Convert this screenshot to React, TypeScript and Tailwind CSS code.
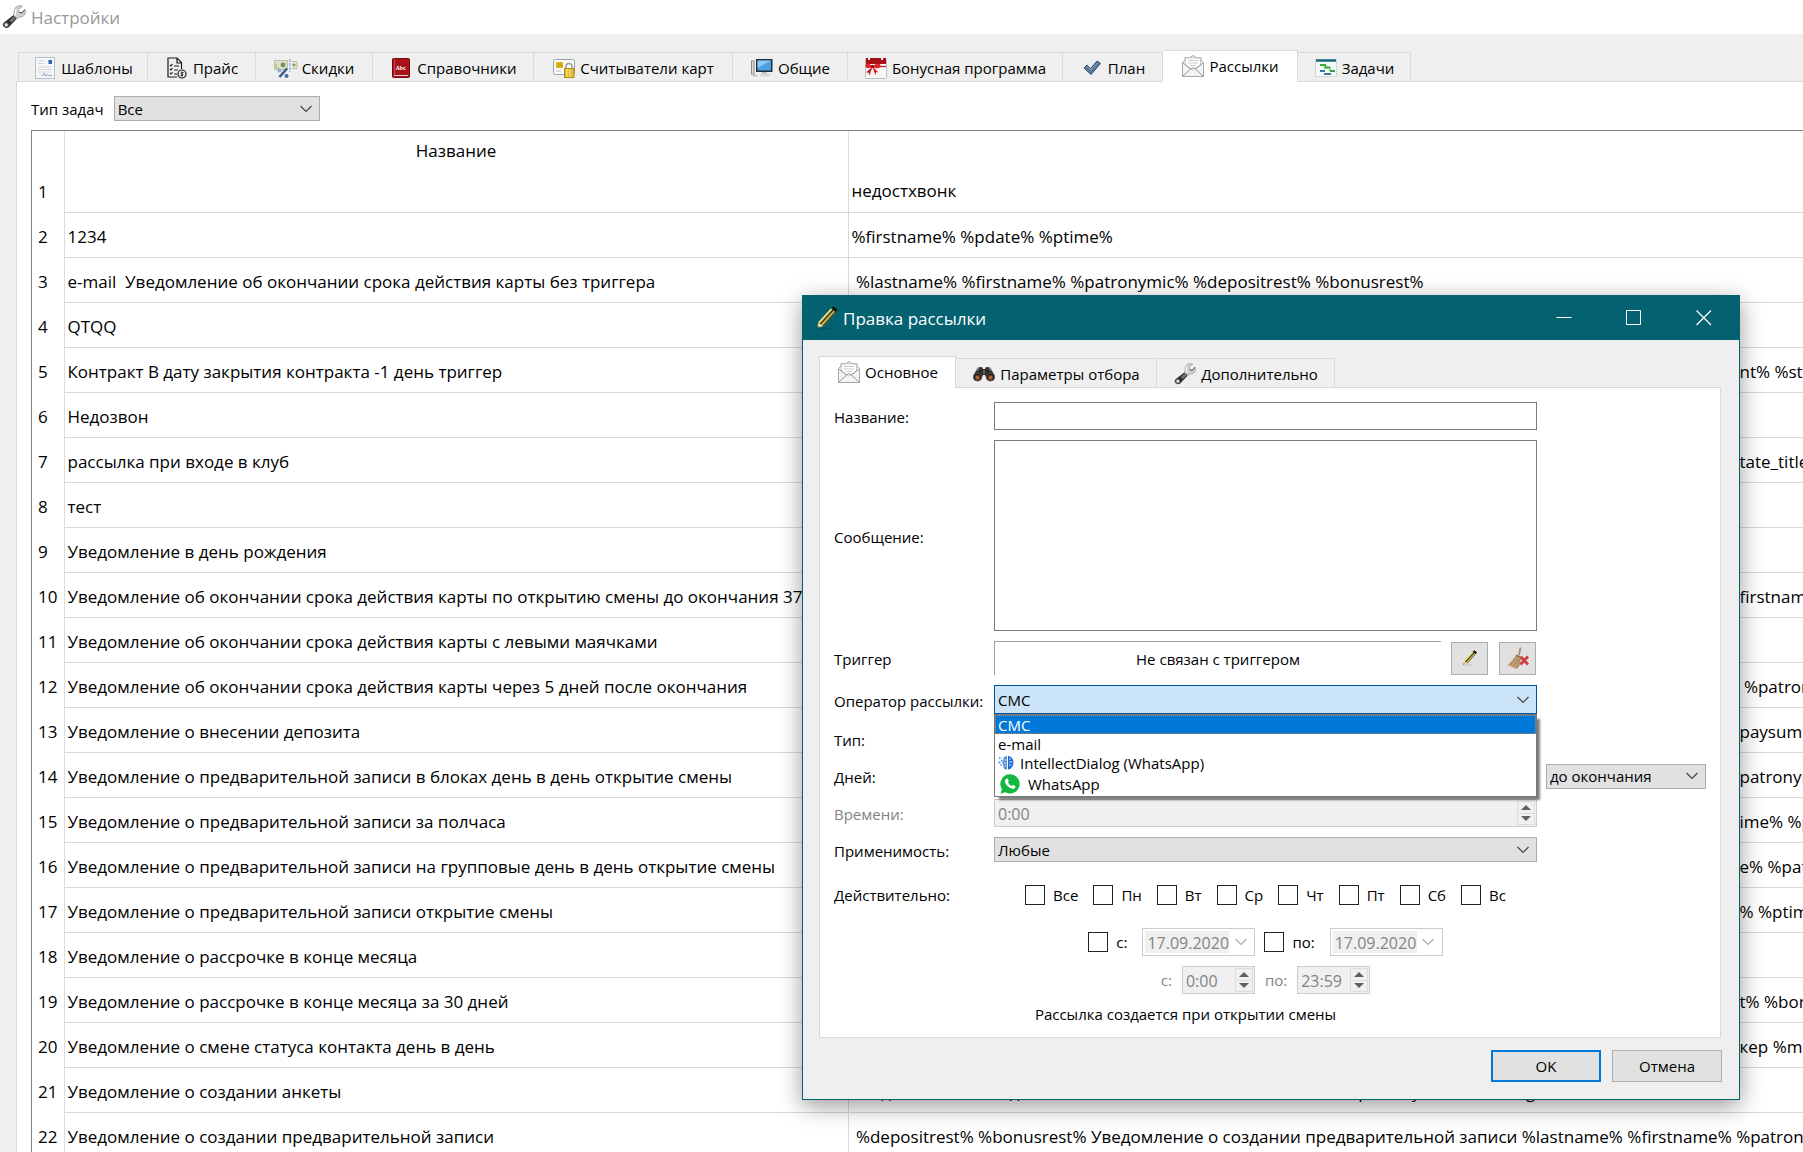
import React, { useState } from 'react';

type IconProps = { className?: string };

const WrenchIcon = ({ className = 'size-6' }: IconProps) => (
  <svg viewBox="0 0 24 24" className={className} aria-hidden="true">
    <path d="M11.500 10 15 13.500 7 22Q4.500 24.200 2 22T2 17.500Z" fill="#2f2f2f" />
    <path d="M11.500 11.500 13.500 13.500 9.500 17.500 7.500 15.500Z" fill="#777" />
    <circle cx="4.200" cy="19.900" r="2.100" fill="#e8e8e8" stroke="#555" />
    <path d="M20.500 1.200C17.500 0 13.500 1 12.500 4.500 12 6.500 13 8 11 10L14.800 13.500C16.500 11.800 18.500 12.500 20.500 11.500 23.500 10 24 6.500 22.800 4.500L20 8 16.800 7.200 16.200 4.500Z" fill="#cfcfcf" stroke="#8b8b8b" strokeWidth="0.700" />
    <path d="M14 4C13.300 6.500 14.200 8.500 12.800 10.300" stroke="#fff" strokeWidth="1.300" fill="none" />
    <path d="M16.800 7.200 20 8 22.800 4.500" stroke="#555" fill="none" />
  </svg>
);

const TemplateIcon = () => (
  <svg viewBox="0 0 20 22" className="w-5 h-[22px]" aria-hidden="true">
    <rect x="0.500" y="0.500" width="19" height="21" fill="#f5f7f9" stroke="#b9c0c6" />
    <path d="M3 4h7M3 6.500h6M3 10h14M3 12.500h14M3 15h13" stroke="#d3d6d8" />
    <rect x="13.500" y="3" width="3.500" height="4" fill="#2f62b5" />
    <path d="M7 19c2-3 3-3 3-1s2-1 3 0 2 1 4 0" stroke="#8587cf" fill="none" />
  </svg>
);

const PriceIcon = () => (
  <svg viewBox="0 0 20 22" className="w-5 h-[22px]" aria-hidden="true" fill="none" stroke="#1c1c1c" strokeWidth="1.200">
    <path d="M10 20H1V1H10L14.500 5.500V12M10 1V6H14.500" />
    <path d="M3 8l1 1 1.500-2M3 12l1 1 1.500-2M3 16l1 1 1.500-2M7 9h5M7 13h4M7 17h3" strokeWidth="1.100" />
    <circle cx="15" cy="17" r="4" />
    <path d="M16.500 15.500h-2q-1 .8 0 1.500h1q1 .8 0 1.600h-2M15 14.500v5" strokeWidth="0.900" />
  </svg>
);

const DiscountIcon = () => (
  <svg viewBox="0 0 24 22" className="w-6 h-[22px]" aria-hidden="true">
    <rect x="0.500" y="3.500" width="13" height="9" fill="#dde3c8" stroke="#b9c0a0" />
    <circle cx="9" cy="8" r="2.400" fill="#7b8c5c" />
    <path d="M2 7v4h3" stroke="#a2ad84" fill="none" />
    <path d="M16 2v13" stroke="#5f92d6" strokeDasharray="3 1" />
    <path d="M18 4.500h5v7h-5" fill="#e6ead4" stroke="#b9c0a0" />
    <circle cx="20" cy="8" r="1.600" fill="#8a9a6b" />
    <path d="M13 11.500 5.500 20" stroke="#3b5c8a" strokeWidth="2.600" />
    <circle cx="5.500" cy="13.500" r="2" fill="#8fabd2" />
    <circle cx="12.500" cy="19" r="2" fill="#4468a3" />
  </svg>
);

const BookIcon = () => (
  <svg viewBox="0 0 18 20" className="w-[18px] h-5" aria-hidden="true">
    <rect x="0.500" y="0.500" width="17" height="19" rx="1" fill="#a8141b" stroke="#79090f" />
    <path d="M2.500 1v16" stroke="#c5474c" />
    <path d="M2 17.500h14" stroke="#e4c7c5" />
    <text x="3.500" y="12" fontSize="6" fill="#fff" fontFamily="Liberation Serif" fontWeight="700">Abc</text>
  </svg>
);

const CardIcon = () => (
  <svg viewBox="0 0 22 20" className="w-[22px] h-5" aria-hidden="true">
    <rect x="0.500" y="1.500" width="21" height="15" rx="2" fill="#fafafa" stroke="#9fa3a5" />
    <rect x="3" y="4" width="7" height="6" fill="#efcc16" />
    <path d="M3 6h7M3 8h7M5.500 4v6M8 4v6" stroke="#a98b00" strokeWidth="0.600" />
    <path d="M3 13h5" stroke="#bbb" />
    <path d="M13 12V8.500a3 3 0 0 1 6 0V12" fill="none" stroke="#9c9c9c" strokeWidth="1.500" />
    <rect x="11.500" y="10.500" width="9.500" height="9" fill="#e0bd32" stroke="#ae8c16" />
    <path d="M14 11v8M17 11v8" stroke="#f7e791" />
  </svg>
);

const MonitorIcon = () => (
  <svg viewBox="0 0 22 20" className="w-[22px] h-5" aria-hidden="true">
    <rect x="0.500" y="3" width="2.500" height="13" fill="#dcdcdc" stroke="#8c8c8c" />
    <path d="M2 17q2 2.500 4 0" fill="none" stroke="#999" />
    <rect x="5" y="1" width="16.500" height="13" fill="#252e38" />
    <rect x="6.500" y="2.500" width="13.500" height="10" fill="#4b9fe5" />
    <path d="M6.500 2.500H20L6.500 10Z" fill="#8ac7f5" />
    <path d="M11 14h5v2h-5z" fill="#bbb" />
    <ellipse cx="14" cy="17" rx="5.500" ry="1.500" fill="#d6d6d6" />
  </svg>
);

const GiftIcon = () => (
  <svg viewBox="0 0 22 22" className="size-[22px]" aria-hidden="true">
    <rect x="0.500" y="1.500" width="21" height="20" rx="1" fill="#f8f8f8" stroke="#bdbdbd" />
    <path d="M1 1h20v6H1z" fill="#a81018" />
    <path d="M4 0v3M17 0v3" stroke="#eee" strokeWidth="2" />
    <path d="M1 9.500h20" stroke="#c5161d" strokeWidth="1.200" />
    <path d="M7.500 9.500C4 5 0 6 0.500 9s4 2.500 7 0.500C10.500 12 15 12 15.500 9s-4-4-8 0.500Z" fill="#e0252b" />
    <path d="M7.500 9.500 1 15.500 3.500 15.500 4.500 18.500ZM7.500 9.500l6 6-2.500-0.500-0.500 3.500Z" fill="#cb151b" />
    <circle cx="7.500" cy="9.500" r="1.700" fill="#99090e" />
  </svg>
);

const CheckMarkIcon = () => (
  <svg viewBox="0 0 18 16" className="w-[18px] h-4" aria-hidden="true">
    <path d="M1 8 4 5 7.500 8.500 14 1 17.500 3.500 8 14.500Z" fill="#587797" stroke="#34506c" />
    <path d="M3 8 4.500 6.500 7.500 10 14.500 3" fill="none" stroke="#8ea8c1" />
  </svg>
);

const MailIcon = ({ className = 'size-[22px]' }: IconProps) => (
  <svg viewBox="0 0 22 22" className={className} aria-hidden="true">
    <path d="M0.500 7.500 3 5V2.500H8L11 0.500 14 2.500H19V5L21.500 7.500V21.500H0.500Z" fill="#f3f3f3" stroke="#a6a6a6" />
    <path d="M3.500 3h15v7l-7.500 5-7.500-5z" fill="#fff" stroke="#c9c9c9" />
    <path d="M6 5.500h10M6 8h10M8 10.500h6" stroke="#c9c9c9" />
    <path d="M1 8 8.500 14 1 21M21 8l-7.500 6 7.500 7M8.500 14l2.500-1.500 2.500 1.500" fill="none" stroke="#979797" />
  </svg>
);

const TasksIcon = () => (
  <svg viewBox="0 0 22 18" className="w-[22px] h-[18px]" aria-hidden="true">
    <rect x="0.500" y="0.500" width="21" height="17" fill="#f5f8f9" stroke="#d0d8dc" />
    <path d="M1 1.500h20" stroke="#17697d" strokeWidth="2.500" />
    <path d="M5 6h6M9 8.500h6M15 12h5" stroke="#38a936" strokeWidth="1.800" />
    <path d="M5 12h5M9 15h7" stroke="#377c91" strokeWidth="1.800" />
    <path d="M11 6v2M15 8v4" stroke="#38a936" />
  </svg>
);

const PencilIcon = ({ className = 'size-6' }: IconProps) => (
  <svg viewBox="0 0 24 24" className={className} aria-hidden="true">
    <path d="M4 22.500h11" stroke="#000" strokeOpacity="0.150" strokeWidth="1.500" />
    <path d="M2 22 3.500 16.500 16.500 2 21 5 8 20Z" fill="#d8c25a" />
    <path d="M5.200 18.300 18.500 3.500" stroke="#3a3714" strokeWidth="1.600" />
    <path d="M7.800 20 21 5" stroke="#5e561c" strokeWidth="1.200" />
    <path d="M3.800 16.500 16.800 2.500" stroke="#f0e391" strokeWidth="1.200" />
    <path d="M16 2.500 18.500 0.500 22.500 3.500 20.500 6Z" fill="#161616" />
    <path d="M2 22 3.600 17 7.500 20Z" fill="#ecd9bd" />
    <path d="M2 22 2.700 19.800 4.300 21Z" fill="#111" />
  </svg>
);

const BinocularsIcon = () => (
  <svg viewBox="0 0 22 16" className="w-[22px] h-4" aria-hidden="true">
    <path d="M0.500 9 5 1.500 9 1 10 3H12L13 1 17 1.500 21.500 9V13L14 14 12 9H10L8 14 0.500 13Z" fill="#2d2d2d" />
    <path d="M4 5 6 2M16 2l2 3M11 4v4" stroke="#888" strokeWidth="1.200" />
    <circle cx="4.500" cy="11" r="4" fill="#241b16" stroke="#555" />
    <circle cx="17.500" cy="11" r="4" fill="#241b16" stroke="#555" />
    <circle cx="4.500" cy="11.500" r="2.200" fill="#b0602a" />
    <circle cx="17.500" cy="11.500" r="2.200" fill="#b0602a" />
  </svg>
);

const BroomIcon = () => (
  <svg viewBox="0 0 22 22" className="size-[22px]" aria-hidden="true">
    <path d="M13.500 0.500 12 8" stroke="#a58f7d" strokeWidth="1.800" />
    <path d="M9.500 8 14.500 10 12.500 19 9.500 22 0.500 18C4 15.500 6.500 11 9.500 8Z" fill="#c39f74" />
    <path d="M9.500 10 3.500 18M11.500 11 6.500 20M13 12 10 21" stroke="#a37e52" />
    <path d="M9 8.300 15 10.800" stroke="#8a6d50" strokeWidth="1.500" />
    <path d="M14 10 21 17.500M21 9.500 13.500 17.500" stroke="#d23c43" strokeWidth="2.800" />
  </svg>
);

const BrainIcon = () => (
  <svg viewBox="0 0 16 16" className="size-4" aria-hidden="true">
    <path d="M9 1C6.500 1 5 3 5.500 5 4 6.500 4 9 5.500 10 5 13 7 15 9 14.500Z" fill="#4d8fe0" />
    <path d="M10 1c3 0 5.500 3 5.500 6.500S13 14.500 10 14.500Z" fill="#1f66d0" />
    <path d="M6.500 5h2M6 8h2.500M7 11h1.500M11 4h2M11 7h3.500M11 10h2.500" stroke="#d9ebff" />
    <path d="M1 3h1.500M3 5.500h1.500M0.500 7.500h2M2.500 10h1.500" stroke="#3d82de" strokeWidth="1.500" />
  </svg>
);

const WhatsAppIcon = () => (
  <svg viewBox="0 0 20 20" className="size-5" aria-hidden="true">
    <path d="M10 0.300A9.600 9.600 0 1 1 5.400 18.300L0.500 19.700 1.900 15A9.600 9.600 0 0 1 10 0.300Z" fill="#12b83f" />
    <path d="M6.300 4.800c.7-.6 1.400-.3 1.700.4l.7 1.600c.2.600-.8 1.200-.6 1.700.8 1.500 1.800 2.500 3.400 3.300.6.200 1.200-1 1.800-.8l1.800.9c.6.300.4 1.500-.1 2-1.400 1.500-3.900.9-6-.6-1.600-1.100-3-2.700-3.700-4.300-.7-1.700-.2-3.300 1-4.200Z" fill="#fff" />
  </svg>
);

const Chevron = ({ className = '' }: IconProps) => (
  <svg viewBox="0 0 12 8" className={`w-3 h-2 pointer-events-none ${className}`} fill="none" stroke="currentColor" strokeWidth="1.200" aria-hidden="true">
    <path d="M0.500 1 6 6.500 11.500 1" />
  </svg>
);

const mainTabs = [
  { label: 'Шаблоны', icon: <TemplateIcon />, width: 'w-[130px]' },
  { label: 'Прайс', icon: <PriceIcon />, width: 'w-[108px]' },
  { label: 'Скидки', icon: <DiscountIcon />, width: 'w-[117px]' },
  { label: 'Справочники', icon: <BookIcon />, width: 'w-[161px]' },
  { label: 'Считыватели карт', icon: <CardIcon />, width: 'w-[199px]' },
  { label: 'Общие', icon: <MonitorIcon />, width: 'w-[115px]' },
  { label: 'Бонусная программа', icon: <GiftIcon />, width: 'w-[215px]' },
  { label: 'План', icon: <CheckMarkIcon />, width: 'w-[100px]' },
  { label: 'Рассылки', icon: <MailIcon />, width: 'w-[135px]' },
  { label: 'Задачи', icon: <TasksIcon />, width: 'w-[113px]' },
];

const dialogTabs = [
  { label: 'Основное', icon: <MailIcon />, width: 'w-[137px]' },
  { label: 'Параметры отбора', icon: <BinocularsIcon />, width: 'w-[201px]' },
  { label: 'Дополнительно', icon: <WrenchIcon className="size-[22px]" />, width: 'w-[178px]' },
];

// text: start of the message; lead + tail: the part that runs out to the right of the dialog
const rows = [
  { name: '', text: 'недостхвонк' },
  { name: '1234', text: '%firstname% %pdate% %ptime%' },
  { name: 'e-mail  Уведомление об окончании срока действия карты без триггера', text: ' %lastname% %firstname% %patronymic% %depositrest% %bonusrest%' },
  { name: 'QTQQ' },
  { name: 'Контракт В дату закрытия контракта -1 день триггер', tail: 'nt% %state%' },
  { name: 'Недозвон' },
  { name: 'рассылка при входе в клуб', tail: 'tate_title%' },
  { name: 'тест' },
  { name: 'Уведомление в день рождения' },
  { name: 'Уведомление об окончании срока действия карты по открытию смены до окончания 37', lead: '%', tail: 'firstname%' },
  { name: 'Уведомление об окончании срока действия карты с левыми маячками' },
  { name: 'Уведомление об окончании срока действия карты через 5 дней после окончания', tail: ' %patronymic%' },
  { name: 'Уведомление о внесении депозита', lead: '%', tail: 'paysum%' },
  { name: 'Уведомление о предварительной записи в блоках день в день открытие смены', tail: 'patronymic%' },
  { name: 'Уведомление о предварительной записи за полчаса', tail: 'ime% %patronymic%' },
  { name: 'Уведомление о предварительной записи на групповые день в день открытие смены', tail: 'e% %patronymic%' },
  { name: 'Уведомление о предварительной записи открытие смены', tail: '% %ptime%' },
  { name: 'Уведомление о рассрочке в конце месяца' },
  { name: 'Уведомление о рассрочке в конце месяца за 30 дней', tail: 't% %bonusrest%' },
  { name: 'Уведомление о смене статуса контакта день в день', tail: 'кер %manager%' },
  { name: 'Уведомление о создании анкеты', text: 'Уведомление о создании анкеты %lastname% %firstname% %patronymic% %manager%' },
  { name: 'Уведомление о создании предварительной записи', text: ' %depositrest% %bonusrest% Уведомление о создании предварительной записи %lastname% %firstname% %patronymic%' },
];

const days = ['Все', 'Пн', 'Вт', 'Ср', 'Чт', 'Пт', 'Сб', 'Вс'];

const operators = [
  { label: 'СМС' },
  { label: 'e-mail' },
  { label: 'IntellectDialog (WhatsApp)', icon: <BrainIcon /> },
  { label: 'WhatsApp', icon: <WhatsAppIcon /> },
];

type TabItem = { label: string; icon: React.ReactNode; width: string };

const TabBar = ({ tabs, active, onSelect }: { tabs: TabItem[]; active: string; onSelect: (label: string) => void }) => (
  <div role="tablist" className="flex items-end h-[31px]">
    {tabs.map((tab, i) => {
      const isActive = tab.label === active;
      return (
        <button
          key={tab.label}
          type="button"
          role="tab"
          aria-selected={isActive}
          onClick={() => onSelect(tab.label)}
          className={`flex items-center justify-center gap-1 shrink-0 border-t border-r border-[#d9d9d9] whitespace-nowrap ${tab.width} ${i === 0 ? 'border-l' : ''} ${
            isActive ? 'h-8 -mb-px bg-white z-10 pb-0.5' : 'h-[29px] bg-[#efefef] pt-0.5'
          }`}
        >
          <span className="w-6 flex justify-center">{tab.icon}</span>
          <span>{tab.label}</span>
        </button>
      );
    })}
  </div>
);

type SelectProps = { id: string; value: string; className?: string; tone?: string };

const Select = ({ id, value, className = '', tone = 'bg-[#e1e1e1] border-[#adadad]' }: SelectProps) => (
  <div className={`relative ${className}`}>
    <select id={id} defaultValue={value} className={`appearance-none block size-full border pl-[3px] pr-6 outline-none ${tone}`}>
      <option>{value}</option>
    </select>
    <Chevron className="absolute right-2 top-1/2 -translate-y-1/2 text-[#444]" />
  </div>
);

const Spin = ({ id, value, className = '' }: SelectProps) => (
  <div className={`flex h-7 border border-[#ccc] bg-[#f0f0f0] p-px ${className}`}>
    <input id={id} type="text" disabled defaultValue={value} className="flex-1 min-w-0 pl-0.5 pt-0.5 text-base text-[#838383]" />
    <div className="flex flex-col w-[18px] shrink-0 border border-[#dcdcdc]">
      <button type="button" disabled aria-label="Больше" className="flex-1 flex items-center justify-center border-b border-[#dcdcdc]">
        <svg viewBox="0 0 10 5" className="w-[10px] h-[5px]" fill="#606060"><path d="M0 5 5 0 10 5Z" /></svg>
      </button>
      <button type="button" disabled aria-label="Меньше" className="flex-1 flex items-center justify-center">
        <svg viewBox="0 0 10 5" className="w-[10px] h-[5px]" fill="#606060"><path d="M0 0 5 5 10 0Z" /></svg>
      </button>
    </div>
  </div>
);

const DateField = ({ id, value }: SelectProps) => (
  <div className="flex items-center w-[113px] h-7 border border-[#ccc] bg-white p-0.5">
    <input id={id} type="text" disabled defaultValue={value} className="w-[84px] h-[22px] pl-0.5 pt-0.5 text-base bg-[#f0f0f0] text-[#838383]" />
    <button type="button" disabled aria-label="Календарь" className="flex-1 flex justify-center text-[#aaa]">
      <Chevron />
    </button>
  </div>
);

const Check = ({ id, label }: { id: string; label: string }) => (
  <span className="flex items-center gap-2">
    <input id={id} type="checkbox" className="appearance-none size-5 border border-[#222] bg-white checked:bg-[#0078d7]" />
    <label htmlFor={id}>{label}</label>
  </span>
);

const Field = ({ id, label, muted, children }: { id: string; label: string; muted?: boolean; children: React.ReactNode }) => (
  <div className="flex items-center">
    <label htmlFor={id} className={`w-40 shrink-0 whitespace-nowrap pt-0.5 ${muted ? 'text-[#838383]' : ''}`}>{label}</label>
    {children}
  </div>
);

const EditDialog = () => {
  const [tab, setTab] = useState('Основное');
  const [operator, setOperator] = useState('СМС');

  return (
    <div
      role="dialog"
      aria-label="Правка рассылки"
      className="absolute left-[802px] top-[295px] z-20 w-[938px] border border-[#04616f] bg-[#efefef] shadow-[0_6px_22px_rgba(0,0,0,0.4)]"
    >
      <div className="flex items-center h-11 bg-[#04616f] text-white pl-3 text-[17px]">
        <PencilIcon className="size-6 mr-1" />
        <h2 className="flex-1 pt-0.5">Правка рассылки</h2>
        <button type="button" aria-label="Свернуть" className="w-[70px] h-full flex items-center justify-center">
          <svg viewBox="0 0 16 16" className="size-4" stroke="#fff"><path d="M0.500 7.500h15" /></svg>
        </button>
        <button type="button" aria-label="Развернуть" className="w-[70px] h-full flex items-center justify-center">
          <svg viewBox="0 0 16 16" className="size-4" fill="none" stroke="#fff"><path d="M0.500 0.500h14v14h-14z" /></svg>
        </button>
        <button type="button" aria-label="Закрыть" className="w-[70px] h-full flex items-center justify-center">
          <svg viewBox="0 0 16 16" className="size-4" stroke="#fff" strokeWidth="1.200"><path d="M0.500 0.500 15 15M15 0.500 0.500 15" /></svg>
        </button>
      </div>

      <div className="pl-4 pr-[18px] pt-4">
        <TabBar tabs={dialogTabs} active={tab} onSelect={setTab} />
        <div className="border border-[#d9d9d9] bg-white flex flex-col gap-[10px] pl-[14px] pt-[14px] pb-[13px]">
          <Field id="name" label="Название:">
            <input id="name" type="text" className="w-[543px] h-7 border border-[#7a7a7a] bg-white px-1 outline-none" />
          </Field>
          <Field id="message" label="Сообщение:">
            <textarea id="message" className="w-[543px] h-[191px] border border-[#7a7a7a] bg-white px-1 resize-none outline-none" />
          </Field>
          <Field id="trigger" label="Триггер">
            <output id="trigger" className="w-[447px] h-[34px] border-t border-l border-[#a0a0a0] flex items-center justify-center">
              Не связан с триггером
            </output>
            <button type="button" aria-label="Изменить триггер" className="ml-[10px] w-[37px] h-[33px] border border-[#adadad] bg-[#e1e1e1] flex items-center justify-center">
              <PencilIcon className="size-4" />
            </button>
            <button type="button" aria-label="Очистить триггер" className="ml-[11px] w-[37px] h-[33px] border border-[#adadad] bg-[#e1e1e1] flex items-center justify-center">
              <BroomIcon />
            </button>
          </Field>
          <Field id="operator" label="Оператор рассылки:">
            <div className="relative w-[543px]">
              <Select id="operator" value={operator} className="h-[29px]" tone="bg-[#cce4f7] border-[#005499]" />
              <ul role="listbox" aria-label="Оператор рассылки" className="absolute left-0 top-full z-10 w-full h-[83px] border border-[#777] bg-white shadow-[4px_4px_2px_-1px_rgba(0,0,0,0.5)]">
                {operators.map(o => (
                  <li
                    key={o.label}
                    role="option"
                    aria-selected={o.label === operator}
                    onClick={() => setOperator(o.label)}
                    className={`flex items-center px-[3px] ${
                      o.label === 'WhatsApp' ? 'h-6 gap-2 pl-[5px]' : 'h-[19px] gap-1.5'
                    } ${o.label === operator ? 'bg-[#0078d7] text-white outline-1 -outline-offset-1 outline-dotted outline-[#c98a4a]' : ''}`}
                  >
                    {o.icon}
                    <span>{o.label}</span>
                  </li>
                ))}
              </ul>
            </div>
          </Field>
          <Field id="kind" label="Тип:">
            <Select id="kind" value="" className="w-[543px] h-[29px]" />
          </Field>
          <Field id="daysCount" label="Дней:">
            <input id="daysCount" type="text" className="w-[543px] h-[26px] border border-[#7a7a7a]" />
            <label htmlFor="period" aria-label="Период" />
            <Select id="period" value="до окончания" className="ml-[9px] w-40 h-[25px]" />
          </Field>
          <Field id="time" label="Времени:" muted>
            <Spin id="time" value="0:00" className="w-[543px]" />
          </Field>
          <Field id="scope" label="Применимость:">
            <Select id="scope" value="Любые" className="w-[543px] h-[25px]" />
          </Field>
          <div role="group" aria-labelledby="valid" className="flex items-center h-[46px]">
            <span id="valid" className="w-40 shrink-0">Действительно:</span>
            <div className="w-[543px] flex justify-center gap-[15px]">
              {days.map(day => <Check key={day} id={`day-${day}`} label={day} />)}
            </div>
          </div>
          <div className="ml-40 w-[543px] flex items-center justify-center gap-[9px]">
            <div className="flex items-center gap-[15px]">
              <Check id="dateFrom" label="с:" />
              <DateField id="dateFromValue" value="17.09.2020" />
            </div>
            <div className="flex items-center gap-[15px]">
              <Check id="dateTo" label="по:" />
              <DateField id="dateToValue" value="17.09.2020" />
            </div>
          </div>
          <div className="ml-40 w-[543px] flex items-center justify-center gap-[10px] text-[#838383]">
            <label htmlFor="timeFrom">с:</label>
            <Spin id="timeFrom" value="0:00" className="w-[73px]" />
            <label htmlFor="timeTo">по:</label>
            <Spin id="timeTo" value="23:59" className="w-[73px]" />
          </div>
          <p className="w-[703px] text-center">Рассылка создается при открытии смены</p>
        </div>
      </div>

      <div className="flex justify-end gap-[11px] pt-3 pb-[17px] pr-[17px]">
        <button type="button" className="w-[110px] h-8 border-2 border-[#0078d7] bg-[#e1e1e1]">OK</button>
        <button type="button" className="w-[110px] h-8 border border-[#adadad] bg-[#e1e1e1]">Отмена</button>
      </div>
    </div>
  );
};

export default function App() {
  const [tab, setTab] = useState('Рассылки');

  return (
    <div className="relative h-screen overflow-hidden flex flex-col bg-[#efefef] text-black font-['Open_Sans','Noto_Sans',sans-serif] text-[15px] leading-5">
      <header className="flex items-center gap-[5px] h-[34px] shrink-0 bg-white pl-0.5 text-[#999] text-[17px]">
        <WrenchIcon />
        <h1 className="pt-0.5">Настройки</h1>
      </header>

      <div className="pt-4 pl-[18px]">
        <TabBar tabs={mainTabs} active={tab} onSelect={setTab} />
      </div>

      <main className="flex-1 min-h-0 ml-4 border-t border-l border-[#d9d9d9] bg-white pl-[14px] pt-[14px]">
        <div className="flex items-center gap-[10px] h-[25px]">
          <label htmlFor="taskType">Тип задач</label>
          <Select id="taskType" value="Все" className="w-[206px] h-[25px]" />
        </div>

        <div className="mt-[9px] border-t border-l border-[#828282]">
          <table className="table-fixed w-full border-collapse text-[17px] leading-6">
            <colgroup>
              <col className="w-8" />
              <col className="w-[784px]" />
              <col />
            </colgroup>
            <thead>
              <tr className="h-9">
                <th className="border-r border-[#dcdcdc]" />
                <th className="border-r border-[#dcdcdc] font-normal pt-[3px]">Название</th>
                <th />
              </tr>
            </thead>
            <tbody>
              {rows.map((row, i) => (
                <tr key={i} className="h-[45px] whitespace-pre">
                  <th scope="row" className="border-r border-[#dcdcdc] font-normal pl-1.5 pt-1 text-left">{i + 1}</th>
                  <td className="border-r border-b border-[#d9d9d9] pl-[3px] pt-1 overflow-hidden">{row.name}</td>
                  <td className="border-b border-[#d9d9d9] pl-[3px] pt-1 overflow-hidden">
                    {row.text}
                    {row.tail && (
                      <div className="flex">
                        <span className="w-[888px] shrink-0 text-right">{row.lead}</span>
                        <span>{row.tail}</span>
                      </div>
                    )}
                  </td>
                </tr>
              ))}
            </tbody>
          </table>
        </div>
      </main>

      <EditDialog />
    </div>
  );
}
